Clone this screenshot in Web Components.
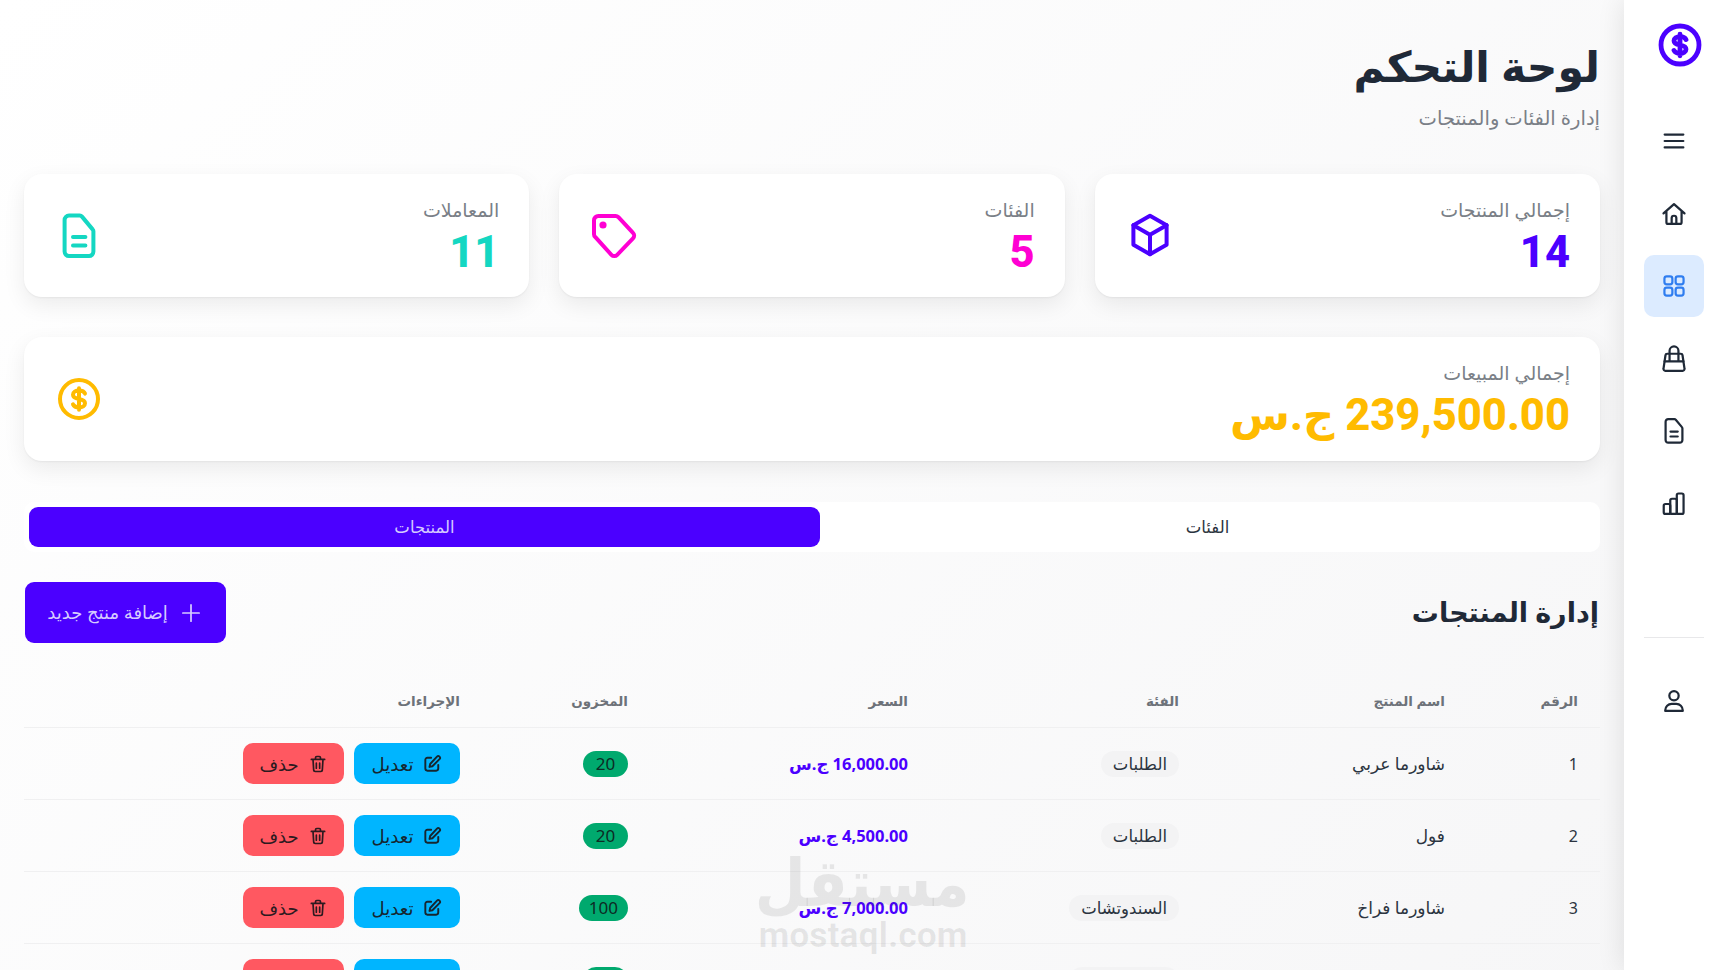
<!DOCTYPE html>
<html lang="ar" dir="rtl">
<head>
<meta charset="utf-8">
<title>لوحة التحكم</title>
<style>
  html, body { margin: 0; height: 970px; overflow: hidden; }
  body {
    font-family: "Noto Sans", "DejaVu Sans", sans-serif;
    color: #1f2937;
    background: linear-gradient(135deg, #ffffff 0%, #f6f6f7 100%);
    display: flex;
    position: relative;
  }
</style>
</head>
<body>
  <app-sidebar></app-sidebar>
  <dash-main>
    <page-title heading="لوحة التحكم" sub="إدارة الفئات والمنتجات"></page-title>
    <stat-grid>
      <stat-card label="إجمالي المنتجات" value="14" color="#4b00ff" icon="cube"></stat-card>
      <stat-card label="الفئات" value="5" color="#ff00d3" icon="tag"></stat-card>
      <stat-card label="المعاملات" value="11" color="#14d7c2" icon="doc"></stat-card>
    </stat-grid>
    <stat-card wide label="إجمالي المبيعات" value="239,500.00 ج.س" color="#ffbb00" icon="dollar"></stat-card>
    <tab-bar first="الفئات" second="المنتجات"></tab-bar>
    <section-head heading="إدارة المنتجات" action="إضافة منتج جديد"></section-head>
    <product-table>
      <product-row num="1" name="شاورما عربي" cat="الطلبات" price="16,000.00 ج.س" stock="20"></product-row>
      <product-row num="2" name="فول" cat="الطلبات" price="4,500.00 ج.س" stock="20"></product-row>
      <product-row num="3" name="شاورما فراخ" cat="السندوتشات" price="7,000.00 ج.س" stock="100"></product-row>
      <product-row num="4" name="شاورما لحم" cat="السندوتشات" price="9,000.00 ج.س" stock="50"></product-row>
    </product-table>
  </dash-main>
  <water-mark></water-mark>

<script>
// أيقونات مشتركة
const ICONS = {
  dollar: '<circle cx="12" cy="12" r="9.5"/><path d="M12 6.6v10.8M15 9.3c-.4-1-1.5-1.5-3-1.5-1.7 0-3 .8-3 2.1s1.3 1.800 3 2.100 3 .8 3 2.100-1.300 2.100-3 2.100c-1.500 0-2.600-.6-3-1.500"/>',
  menu: '<path d="M4 6.500h16M4 12h16M4 17.500h16"/>',
  home: '<path d="M3 11.500 12 3.500l9 8M5.500 9.500V19a1.500 1.500 0 0 0 1.500 1.500h10a1.500 1.500 0 0 0 1.500-1.500V9.500"/><path d="M10 20.500V15.500a2 2 0 0 1 4 0v5"/>',
  grid: '<rect x="3.800" y="3.800" width="6.800" height="6.800" rx="2"/><rect x="13.400" y="3.800" width="6.800" height="6.800" rx="2"/><rect x="3.800" y="13.400" width="6.800" height="6.800" rx="2"/><rect x="13.400" y="13.400" width="6.800" height="6.800" rx="2"/>',
  bag: '<path d="M6.200 7.500h11.600a1.500 1.500 0 0 1 1.500 1.300l1.700 11.400a1.600 1.600 0 0 1-1.600 1.900H4.600a1.600 1.600 0 0 1-1.600-1.900L4.700 8.800a1.500 1.500 0 0 1 1.500-1.300Z"/><path d="M3.900 14h16.200M8.200 14V5a3.800 3.800 0 0 1 7.600 0v9"/>',
  doc: '<path d="M7 1.800h5.300a1.500 1.500 0 0 1 1.200.5l5.300 6.400a1.500 1.500 0 0 1 .4 1V19.800a2.200 2.200 0 0 1-2.200 2.200H7a2.200 2.200 0 0 1-2.200-2.200V4A2.200 2.200 0 0 1 7 1.800Z"/><path d="M9 12.500h6.200M9 16.700h6.200"/>',
  chart: '<rect x="3.200" y="12" width="5.600" height="8.500" rx="1.500"/><rect x="8.800" y="7.500" width="5.600" height="13" rx="1.500"/><rect x="14.400" y="3" width="5.800" height="17.500" rx="1.500"/>',
  user: '<circle cx="12" cy="7.500" r="4"/><path d="M4.500 20.500v-.5a5.500 5.500 0 0 1 5.500-5.500h4a5.500 5.500 0 0 1 5.500 5.500v.5Z"/>',
  cube: '<path d="M12 1.900 20.300 6.600v9.800L12 21.100l-8.300-4.700V6.600Z"/><path d="M3.700 6.600 12 11.400l8.300-4.800M12 11.400v9.700"/>',
  tag: '<path d="M4.200 2h8.500a2 2 0 0 1 1.500.6l7.300 7.800a2 2 0 0 1 0 2.800l-7.900 8.200a2 2 0 0 1-2.900 0L2.700 12.600A2 2 0 0 1 2 11V4.200A2.200 2.200 0 0 1 4.200 2Z"/><circle cx="6.500" cy="6.500" r=".8" fill="currentColor"/>',
  plus: '<path d="M12 4.500v15M4.500 12h15"/>',
  edit: '<path d="M11 4.500H6.500a2.500 2.500 0 0 0-2.500 2.500v10.500A2.500 2.500 0 0 0 6.500 20H17a2.500 2.500 0 0 0 2.500-2.500V13"/><path d="M18 3.200a2.100 2.100 0 0 1 3 3L12.500 14.700 9 15.500l.8-3.500Z"/>',
  trash: '<path d="M4 6.500h16M9 6.500V4.500a1.500 1.500 0 0 1 1.500-1.500h3A1.500 1.500 0 0 1 15 4.500v2M6 6.500l.8 12.500A2 2 0 0 0 8.800 21h6.400a2 2 0 0 0 2-2l.8-12.500M10 11v6M14 11v6"/>'
};

const svgIcon = (name, size, stroke = 2) =>
  `<svg width="${size}" height="${size}" viewBox="0 0 24 24" fill="none" stroke="currentColor" stroke-width="${stroke}" stroke-linecap="round" stroke-linejoin="round" aria-hidden="true">${ICONS[name]}</svg>`;

const ARABIC = `"Noto Sans", "DejaVu Sans", sans-serif`;

class AppSidebar extends HTMLElement {
  constructor() {
    super();
    this.attachShadow({ mode: 'open' });
  }

  connectedCallback() {
    const items = [['menu', 0], ['home', 0], ['grid', 1], ['bag', 0], ['doc', 0], ['chart', 0]];
    this.shadowRoot.innerHTML = `
      <style>
        :host {
          display: flex;
          flex-direction: column;
          flex: none;
          box-sizing: border-box;
          width: 101px;
          height: 970px;
          padding: 0 21px 0 20px;
          background: #fff;
          color: #1f2937;
          box-shadow: 0 0 26px rgba(0,0,0,0.11);
          position: relative;
          z-index: 2;
        }
        .logo { height: 90px; padding-top: 21px; box-sizing: border-box; color: #4b00ff; display: flex; justify-content: center; }
        .logo svg { margin-right: -6px; margin-left: -6px; transform: translateX(6px); }
        nav { display: flex; flex-direction: column; gap: 10.6px; margin-top: 20px; }
        .item { width: 60px; height: 62px; display: flex; align-items: center; justify-content: center; border-radius: 10px; }
        .item.on { background: #dcebff; color: #2f7df0; }
        hr { border: 0; border-top: 1px solid #e8e8ea; margin: 102px 0 0; width: 60px; }
        .user { margin-top: 32px; }
      </style>
      <div class="logo">${svgIcon('dollar', 48, 2.4)}</div>
      <nav>
        ${items.map(([n, on]) => `<div class="item ${on ? 'on' : ''}">${svgIcon(n, 28, 1.9)}</div>`).join('')}
      </nav>
      <hr>
      <div class="item user">${svgIcon('user', 28, 1.9)}</div>
    `;
  }
}
customElements.define('app-sidebar', AppSidebar);

class DashMain extends HTMLElement {
  constructor() {
    super();
    this.attachShadow({ mode: 'open' });
    this.shadowRoot.innerHTML = `
      <style>
        :host { display: block; flex: 1; min-width: 0; box-sizing: border-box; padding: 0 24px; height: 970px; overflow: hidden; }
      </style>
      <slot></slot>
    `;
  }
}
customElements.define('dash-main', DashMain);

class PageTitle extends HTMLElement {
  constructor() {
    super();
    this.attachShadow({ mode: 'open' });
  }

  connectedCallback() {
    this.shadowRoot.innerHTML = `
      <style>
        :host { display: block; height: 174px; box-sizing: border-box; padding: 38px 0 0 0; font-family: ${ARABIC}; }
        h1 { margin: 0; font-size: 42.500px; line-height: 56px; font-weight: 700; color: #1f2937; }
        p { margin: 11px 0 0; font-size: 19.5px; line-height: 26px; color: #7a7f87; }
      </style>
      <h1>${this.getAttribute('heading')}</h1>
      <p>${this.getAttribute('sub')}</p>
    `;
  }
}
customElements.define('page-title', PageTitle);

class StatGrid extends HTMLElement {
  constructor() {
    super();
    this.attachShadow({ mode: 'open' });
    this.shadowRoot.innerHTML = `
      <style>
        :host { display: grid; grid-template-columns: repeat(3, 1fr); column-gap: 30px; margin-bottom: 40px; }
      </style>
      <slot></slot>
    `;
  }
}
customElements.define('stat-grid', StatGrid);

class StatCard extends HTMLElement {
  constructor() {
    super();
    this.attachShadow({ mode: 'open' });
  }

  connectedCallback() {
    const color = this.getAttribute('color');
    this.shadowRoot.innerHTML = `
      <style>
        :host {
          display: flex;
          align-items: center;
          justify-content: space-between;
          box-sizing: border-box;
          height: 123px;
          padding: 0 30px 0 31px;
          background: #fff;
          border-radius: 18px;
          box-shadow: 0 8px 22px rgba(0,0,0,0.075), 0 1px 2px rgba(0,0,0,0.05);
          font-family: ${ARABIC};
        }
        :host([wide]) { height: 124px; margin-bottom: 41px; }
        .text { padding-top: 4px; }
        .label { font-size: 19px; line-height: 30px; color: #7a7f87; margin-top: -6px; margin-bottom: 6px; }
        .value { font-size: 43.500px; line-height: 44px; font-weight: 800; color: ${color}; font-family: Roboto, "DejaVu Sans", sans-serif; }
        .icon { color: ${color}; display: flex; }
      </style>
      <div class="text">
        <div class="label">${this.getAttribute('label')}</div>
        <div class="value">${this.getAttribute('value')}</div>
      </div>
      <div class="icon">${svgIcon(this.getAttribute('icon'), 48, 2)}</div>
    `;
  }
}
customElements.define('stat-card', StatCard);

class TabBar extends HTMLElement {
  constructor() {
    super();
    this.attachShadow({ mode: 'open' });
  }

  connectedCallback() {
    this.shadowRoot.innerHTML = `
      <style>
        :host {
          display: grid;
          grid-template-columns: 775px 791px;
          box-sizing: border-box;
          height: 50px;
          padding: 5px;
          background: #fff;
          border-radius: 10px;
          margin-bottom: 30px;
          font-size: 16.5px;
          font-family: ${ARABIC};
        }
        div { display: flex; align-items: center; justify-content: center; padding-bottom: 2px; border-radius: 9px; color: #2b3440; }
        .on { background: #4b00ff; color: #d6ccff; }
      </style>
      <div>${this.getAttribute('first')}</div>
      <div class="on">${this.getAttribute('second')}</div>
    `;
  }
}
customElements.define('tab-bar', TabBar);

class SectionHead extends HTMLElement {
  constructor() {
    super();
    this.attachShadow({ mode: 'open' });
  }

  connectedCallback() {
    this.shadowRoot.innerHTML = `
      <style>
        :host { display: flex; align-items: center; justify-content: space-between; height: 61px; padding: 0 1px 0 1px; font-family: ${ARABIC}; }
        h2 { margin: -2px 0 0; font-size: 27px; font-weight: 700; color: #1f2937; }
        button {
          display: flex; align-items: center; justify-content: center; gap: 10px;
          width: 201px; height: 61px; padding: 0; border: 0; border-radius: 9px;
          background: #4b00ff; color: #d6ccff; font: inherit; font-size: 18px;
        }
        span { margin-top: -2px; }
      </style>
      <h2>${this.getAttribute('heading')}</h2>
      <button>${svgIcon('plus', 26, 1.6)}<span>${this.getAttribute('action')}</span></button>
    `;
  }
}
customElements.define('section-head', SectionHead);

const TABLE_COLUMNS = '133px 266px 271px 280px 168px 458px';

class ProductTable extends HTMLElement {
  constructor() {
    super();
    this.attachShadow({ mode: 'open' });
    const heads = ['الرقم', 'اسم المنتج', 'الفئة', 'السعر', 'المخزون', 'الإجراءات'];
    this.shadowRoot.innerHTML = `
      <style>
        :host { display: block; margin-top: 30px; font-family: ${ARABIC}; }
        .head {
          display: grid; grid-template-columns: ${TABLE_COLUMNS}; align-items: center;
          height: 55px; box-sizing: border-box; padding-top: 2px;
          border-bottom: 1px solid #f0f0f1;
          font-size: 13.5px; font-weight: 700; color: #6d7279;
        }
        .head span { padding-right: 22px; }
      </style>
      <div class="head">${heads.map(h => `<span>${h}</span>`).join('')}</div>
      <slot></slot>
    `;
  }
}
customElements.define('product-table', ProductTable);

class ProductRow extends HTMLElement {
  constructor() {
    super();
    this.attachShadow({ mode: 'open' });
  }

  connectedCallback() {
    const g = n => this.getAttribute(n);
    this.shadowRoot.innerHTML = `
      <style>
        :host {
          display: grid; grid-template-columns: ${TABLE_COLUMNS}; align-items: center;
          height: 72px; box-sizing: border-box;
          border-bottom: 1px solid #f0f0f1;
          font-size: 17px; color: #2b3440;
        }
        .cell { padding-right: 22px; display: flex; align-items: center; }
        .num { font-size: 16px; }
        .pill { display: inline-flex; align-items: center; height: 26px; padding: 0 12px; border-radius: 13px; background: #f3f3f4; color: #2b3440; font-size: 16.500px; }
        .price { color: #4b00ff; font-weight: 700; font-size: 16.500px; }
        .stock { display: inline-flex; align-items: center; justify-content: center; height: 26px; min-width: 45px; padding: 0 10px; box-sizing: border-box; border-radius: 13px; background: #00a96e; color: #0d2b25; font-size: 17px; }
        .actions { gap: 10px; }
        .btn { display: flex; align-items: center; justify-content: center; gap: 9px; height: 41px; box-sizing: border-box; border-radius: 10px; color: #16262f; font-size: 18px; }
        .edit { width: 106px; background: #00b5ff; }
        .del { width: 101px; background: #ff5861; color: #2c1a20; }
      </style>
      <div class="cell num">${g('num')}</div>
      <div class="cell">${g('name')}</div>
      <div class="cell"><span class="pill">${g('cat')}</span></div>
      <div class="cell price">${g('price')}</div>
      <div class="cell"><span class="stock">${g('stock')}</span></div>
      <div class="cell actions">
        <div class="btn edit">${svgIcon('edit', 20, 2.3)}<span>تعديل</span></div>
        <div class="btn del">${svgIcon('trash', 20, 2)}<span>حذف</span></div>
      </div>
    `;
  }
}
customElements.define('product-row', ProductRow);

class WaterMark extends HTMLElement {
  constructor() {
    super();
    this.attachShadow({ mode: 'open' });
    this.shadowRoot.innerHTML = `
      <style>
        :host {
          position: absolute; left: 750px; top: 838px; width: 226px;
          text-align: center; color: rgba(30,30,30,0.09); pointer-events: none;
          font-family: ${ARABIC};
        }
        .ar { font-size: 66px; line-height: 84px; font-weight: 700; transform: translateX(6px) scaleX(0.89); }
        .en { font-size: 35.500px; line-height: 36px; font-weight: 700; font-family: Roboto, sans-serif; margin-top: -5px; }
      </style>
      <div class="ar">مستقل</div>
      <div class="en">mostaql.com</div>
    `;
  }
}
customElements.define('water-mark', WaterMark);
</script>
</body>
</html>
